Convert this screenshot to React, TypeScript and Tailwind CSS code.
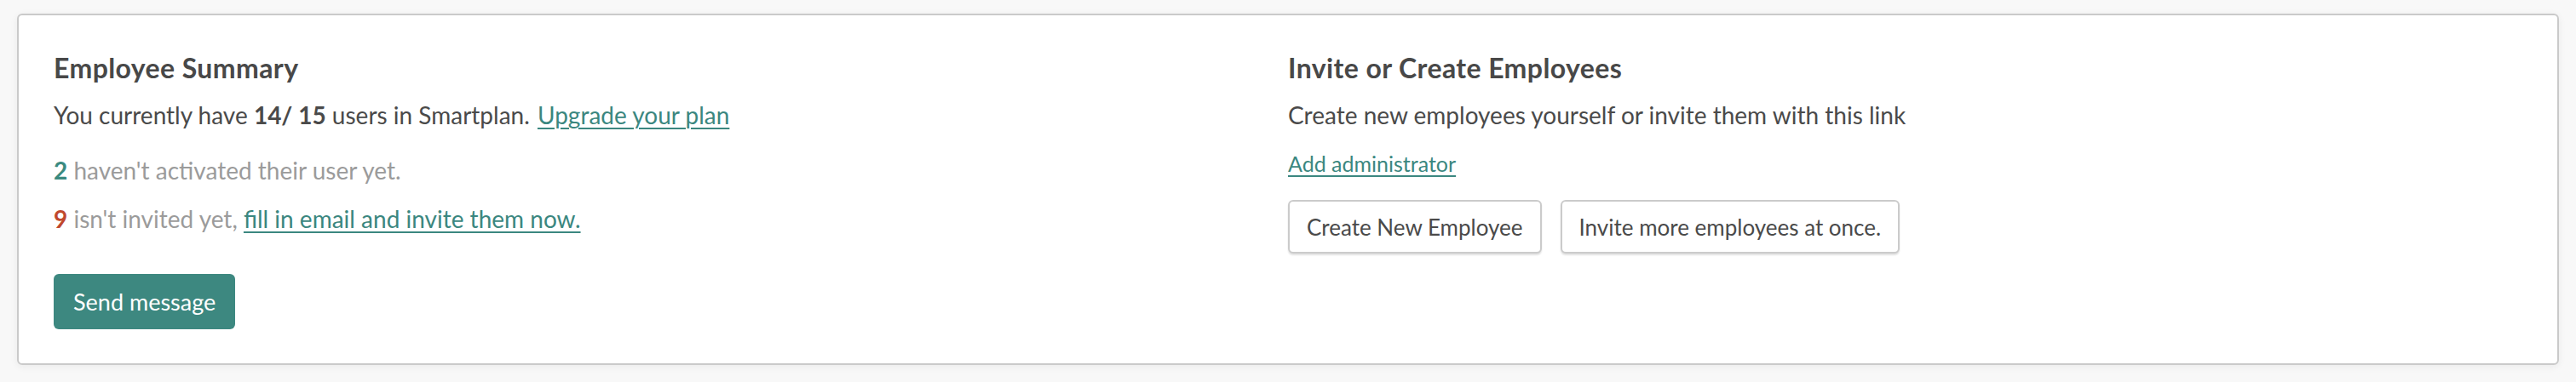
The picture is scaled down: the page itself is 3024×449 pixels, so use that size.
import React from 'react'

const font = { fontFamily: 'Lato, "Open Sans", sans-serif' }

function App() {
  return (
    <div className="min-h-screen bg-[#f8f8f8] px-[20px] pt-[16px] pb-[20px]" style={font}>
      <div className="rounded-[6px] border-2 border-[#cacaca] bg-white px-[41px] pt-[44px] pb-[40px] shadow-[0_2px_10px_rgba(0,0,0,0.06)]">
        <div className="grid grid-cols-2">
          {/* left column */}
          <section className="flex flex-col items-start">
            <h2 className="text-[32px] leading-[36px] font-bold tracking-[0.4px] text-[#484848]">Employee Summary</h2>
            <p className="mt-[20px] text-[28px] leading-[34px] text-[#4a4a4a]">
              You currently have <strong className="font-bold">14/ 15</strong> users in Smartplan.{' '}
              <a href="#" className="ml-[2px] text-[#3b8780] underline decoration-[2px] underline-offset-[4px]">
                Upgrade your plan
              </a>
            </p>
            <p className="mt-[31px] text-[28px] leading-[34px] text-[#9b9b9b]">
              <span className="font-bold text-[#3a8a80]">2</span> haven't activated their user yet.
            </p>
            <p className="mt-[23px] text-[28px] leading-[34px] text-[#9b9b9b]">
              <span className="font-bold text-[#c0482d]">9</span> isn't invited yet,{' '}
              <a href="#" className="text-[#3b8780] underline decoration-[2px] underline-offset-[4px]">
                fill in email and invite them now.
              </a>
            </p>
            <button
              type="button"
              className="mt-[48px] flex h-[65px] items-center rounded-[6px] bg-[#3d8880] px-[23px] text-[27px] leading-[34px] text-white"
            >
              Send message
            </button>
          </section>

          {/* right column */}
          <section className="flex flex-col items-start">
            <h2 className="text-[32px] leading-[36px] font-bold tracking-[0.4px] text-[#484848]">Invite or Create Employees</h2>
            <p className="mt-[20px] text-[28px] leading-[34px] text-[#4a4a4a]">
              Create new employees yourself or invite them with this link
            </p>
            <a
              href="#"
              className="mt-[24px] text-[25px] leading-[32px] text-[#3b8780] underline decoration-[2px] underline-offset-[4px]"
            >
              Add administrator
            </a>
            <div className="mt-[27px] flex gap-[22px]">
              <button
                type="button"
                className="flex h-[63px] items-center rounded-[6px] border-2 border-[#cbcbcb] bg-white px-[20px] text-[26px] leading-[34px] text-[#4a4a4a] shadow-[0_2px_2px_rgba(0,0,0,0.12)]"
              >
                Create New Employee
              </button>
              <button
                type="button"
                className="flex h-[63px] items-center rounded-[6px] border-2 border-[#cbcbcb] bg-white px-[20px] text-[26px] leading-[34px] text-[#4a4a4a] shadow-[0_2px_2px_rgba(0,0,0,0.12)]"
              >
                Invite more employees at once.
              </button>
            </div>
          </section>
        </div>
      </div>
    </div>
  )
}

export default App
